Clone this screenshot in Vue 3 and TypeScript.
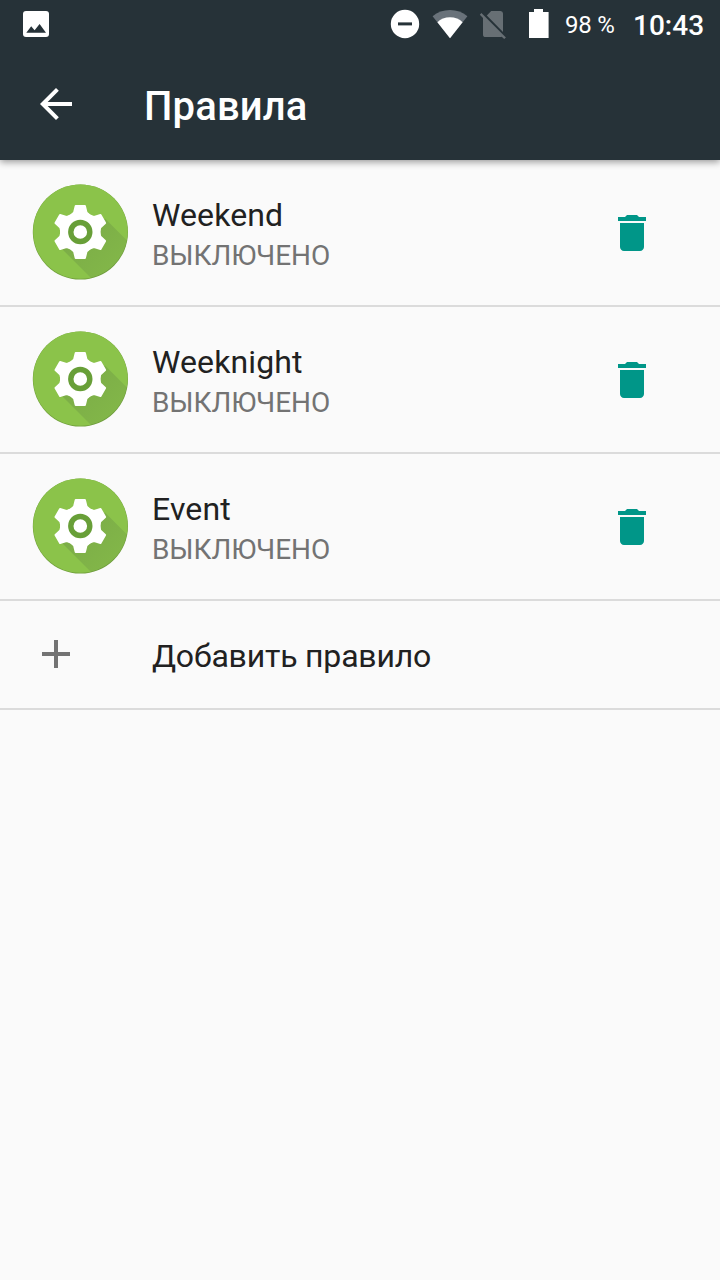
<script setup lang="ts">
interface Rule {
  name: string
  status: string
}

const rules: Rule[] = [
  { name: 'Weekend', status: 'ВЫКЛЮЧЕНО' },
  { name: 'Weeknight', status: 'ВЫКЛЮЧЕНО' },
  { name: 'Event', status: 'ВЫКЛЮЧЕНО' },
]

const toothAngles: number[] = [0, 60, 120, 180, 240, 300]
</script>

<template>
  <div class="screen">
    <header class="top">
      <div class="status-bar">
        <svg class="photo" width="26" height="26" viewBox="23 11 26 26">
          <rect x="23" y="11" width="26" height="26" rx="3" fill="#fff" />
          <path d="M26.3 32.8 31.2 26.2 34.6 30.2 39.6 24 46 32.8Z" fill="#263238" />
        </svg>
        <div class="indicators">
          <svg class="dnd" width="30" height="30" viewBox="390 9 30 30">
            <circle cx="405" cy="24" r="14.2" fill="#fff" />
            <rect x="398" y="22.4" width="14" height="3" fill="#263238" />
          </svg>
          <svg class="wifi" width="36" height="30" viewBox="432 9 36 30">
            <path d="M450 38.2 467.4 16.2C462.6 12.2 456.6 10 450 10S437.4 12.2 432.6 16.2Z" fill="#69727a" />
            <path d="M450 38.2 462.6 22.2C459.4 19 455 17.2 450 17.2S440.6 19 437.4 22.2Z" fill="#fff" />
          </svg>
          <svg class="sim" width="28" height="30" viewBox="479 10 28 30">
            <path d="M491.2 11H500.5A2.6 2.6 0 0 1 503 13.6V31.9L486.8 15.6Z" fill="#676f74" />
            <path d="M481.4 13 479.8 14.7 483 18V34.4A2.6 2.6 0 0 0 485.6 37H500.4C500.9 37 501.3 36.9 501.7 36.7L504.2 39.1 505.9 37.4Z" fill="#676f74" />
          </svg>
          <svg class="battery" width="20" height="30" viewBox="529 9 20 30">
            <path d="M534 9H543V12H548.6V38H529V12H534Z" fill="#fff" />
          </svg>
          <span class="percent">98 %</span>
          <span class="clock">10:43</span>
        </div>
      </div>
      <div class="toolbar">
        <svg class="back" width="48" height="48" viewBox="0 0 24 24">
          <path d="M20 11H7.83l5.59-5.59L12 4l-8 8 8 8 1.41-1.41L7.83 13H20v-2z" fill="#fff" />
        </svg>
        <h1 class="title">Правила</h1>
      </div>
    </header>

    <svg class="defs" width="0" height="0">
      <defs>
        <linearGradient id="long-shadow" gradientUnits="userSpaceOnUse" x1="48" y1="48" x2="82" y2="82">
          <stop offset="0" stop-color="#263238" stop-opacity=".15" />
          <stop offset="1" stop-color="#263238" stop-opacity=".09" />
        </linearGradient>
        <clipPath id="disc"><circle cx="48.4" cy="48" r="47.4" /></clipPath>
      </defs>
    </svg>

    <main>
      <div v-for="rule in rules" :key="rule.name" class="row">
        <svg class="app-icon" width="96" height="96" viewBox="0 0 96 96">
          <circle cx="48.4" cy="48" r="47.6" fill="#72a13d" />
          <circle cx="48.4" cy="47.6" r="47.2" fill="#8bc34a" />
          <g clip-path="url(#disc)">
            <path d="M27.5 62.5 61.5 96.5H96V57.5L73 34.5Z" fill="url(#long-shadow)" />
          </g>
          <g transform="translate(48.3 48)" fill="#fff" stroke="#fff" stroke-width="2" stroke-linejoin="round">
            <circle r="19.3" />
            <path
              v-for="angle in toothAngles"
              :key="angle"
              :transform="`rotate(${angle})`"
              d="M-4.6 -26H4.6L6.2 -19.5 8.8 -17H-8.8L-6.2 -19.5Z"
            />
          </g>
          <circle cx="48.3" cy="48" r="9.5" fill="#fff" stroke="#689f38" stroke-width="5.4" />
        </svg>
        <div class="labels">
          <div class="name">{{ rule.name }}</div>
          <div class="status">{{ rule.status }}</div>
        </div>
        <svg class="trash" width="48" height="48" viewBox="0 0 24 24">
          <path d="M6 19c0 1.1.9 2 2 2h8c1.1 0 2-.9 2-2V7H6v12zM19 4h-3.5l-1-1h-5l-1 1H5v2h14V4z" fill="#009688" />
        </svg>
      </div>
      <div class="row add">
        <svg class="plus" width="48" height="48" viewBox="0 0 24 24">
          <path d="M19 13h-6v6h-2v-6H5v-2h6V5h2v6h6v2z" fill="#737373" />
        </svg>
        <div class="name">Добавить правило</div>
      </div>
    </main>
  </div>
</template>

<style>
body {
  margin: 0;
  background: #fafafa;
}
</style>

<style scoped>
.screen {
  width: 720px;
  height: 1280px;
  overflow: hidden;
  background: #fafafa;
  font-family: Roboto, sans-serif;
  color: #212121;
}

svg {
  display: block;
  flex: none;
}

.defs {
  height: 0;
}

.top {
  height: 160px;
  background: #263238;
  color: #fff;
  box-shadow: 0 2px 7px rgba(0, 0, 0, 0.4);
}

.status-bar {
  display: flex;
  justify-content: space-between;
  height: 48px;
  box-sizing: border-box;
  padding: 0 16px 0 23px;
}

.photo {
  margin-top: 11px;
}

.indicators {
  display: flex;
  align-items: flex-start;
}

.dnd {
  margin: 9px 12px 0 0;
}

.wifi {
  margin: 9px 11px 0 0;
}

.sim {
  margin: 10px 22px 0 0;
}

.battery {
  margin: 9px 16px 0 0;
}

.percent {
  width: 68px;
  font-size: 24px;
  line-height: 50px;
  letter-spacing: -0.2px;
  white-space: nowrap;
}

.clock {
  width: 71px;
  font-size: 28px;
  font-weight: 500;
  line-height: 51px;
  white-space: nowrap;
}

.toolbar {
  display: flex;
  align-items: center;
  height: 112px;
  padding-left: 32px;
}

.title {
  margin: 6px 0 0 64px;
  font-size: 40px;
  font-weight: 500;
  line-height: 48px;
  letter-spacing: 0.15px;
}

.row {
  display: flex;
  align-items: flex-start;
  height: 147px;
  box-sizing: border-box;
  padding: 24px 64px 0 32px;
  border-bottom: 2px solid #dbdbdb;
}

.labels {
  flex: 1;
  margin: 12px 0 0 24px;
}

.name {
  font-size: 32px;
  line-height: 38px;
  letter-spacing: 0.12px;
}

.status {
  margin-top: 5px;
  font-size: 28px;
  line-height: 33px;
  letter-spacing: -0.08px;
  color: #737373;
}

.trash {
  margin-top: 25px;
}

.add {
  height: 109px;
  padding-top: 29px;
}

.add .name {
  margin: 7px 0 0 72px;
  letter-spacing: -0.2px;
}
</style>
